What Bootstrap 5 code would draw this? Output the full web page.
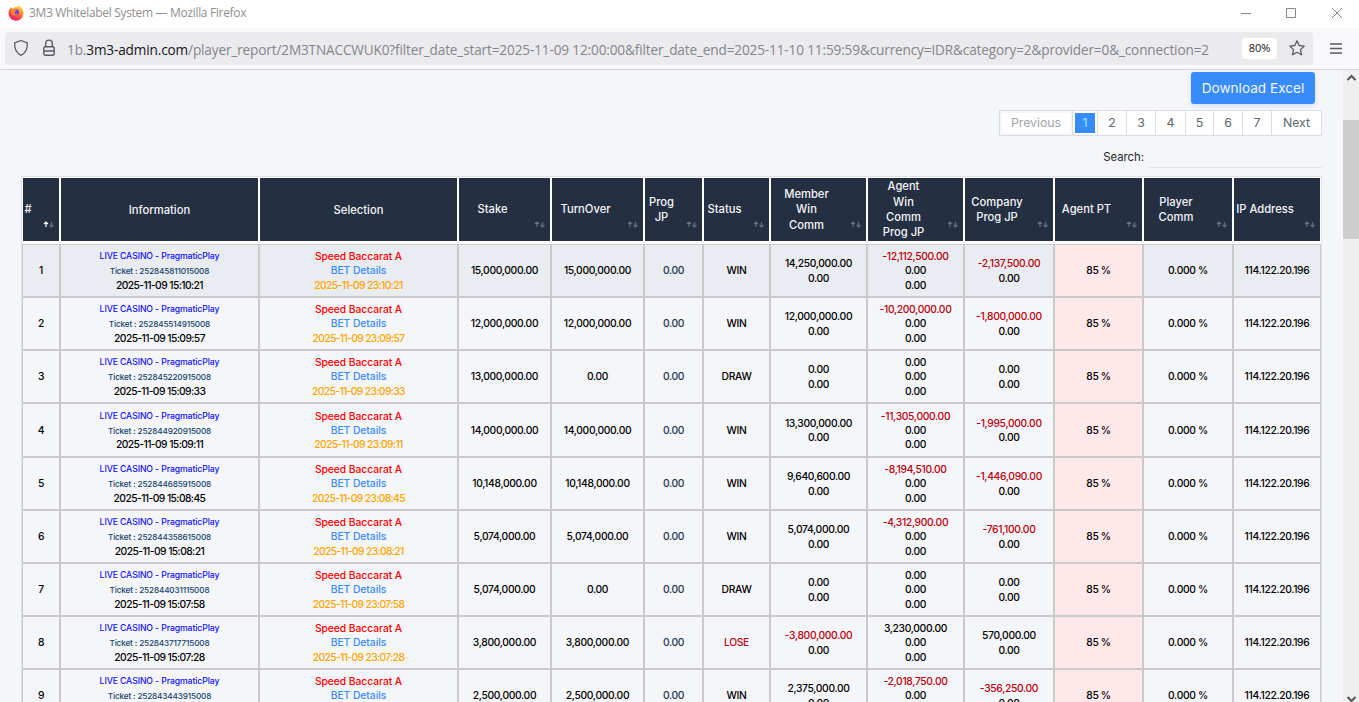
<!DOCTYPE html>
<html lang="en">
<head>
<meta charset="utf-8">
<title>3M3 Whitelabel System</title>
<link href="https://cdn.jsdelivr.net/npm/bootstrap@5.3.0/dist/css/bootstrap.min.css" rel="stylesheet">
<style>
body{height:702px;overflow:hidden;background:#f5f6fa;font-family:Inter,"Open Sans",sans-serif;font-size:11px;color:#000}
svg{flex-shrink:0}
.titlebar{height:28px;background:#fff;font:12px "Open Sans",sans-serif;color:#8f8f8f;padding:0 16px 3px 8px}
.titlebar .caption{letter-spacing:-.32px;margin-left:5px}
.toolbar{height:42px;background:#f9f9fb;border-bottom:1px solid #d2d2da;padding:0 17px 1px 5px;font-family:"Open Sans",sans-serif}
.urlbar{width:1308px;height:33px;background:#ebebee;border-radius:4px;padding:0 8px}
.lock{margin-left:14px}
.star{margin-left:12px}
.address{font-size:13.6px;color:#85858a;margin-left:12px;padding-top:4px;white-space:nowrap;letter-spacing:-.139px}
.address b{font-weight:400;color:#15141a}
.zoomlevel{width:35px;height:21px;background:#fff;border-radius:3px;font-size:11px;color:#15141a;padding-top:1px}
.viewport{height:632px;overflow:hidden}
.content-area{width:1343px;padding:2px 21px 0}
.content-area>*{flex-shrink:0}
.scroller{width:16px;background:#f0f0f0}
.scroller .thumb{height:119px;margin-top:33px;background:#cdcdcd}
.btn-excel{width:124px;height:32px;margin-right:7px;padding:0;background:#388bfa;border:0;border-radius:3px;color:#f2f6ff;font-size:13.6px;box-shadow:0 2px 5px #388bfa33}
.pager{height:26px;margin-top:6px;border:1px solid #dadcdf;background:#fff;font-size:12.3px;color:#5d6570;width:323px}
.pager span{display:flex;align-items:center;justify-content:center;border-right:1px solid #dadcdf}
.pager span:last-child{border-right:0}
.pager .prev{color:#a0a5ab;box-shadow:inset 0 0 0 2px #f5f6fa}
.pager .current{background:#388bfa;background-clip:content-box;padding:2px;color:#a5e6ff}
.search{height:40px;padding-top:10px;font-size:11.3px;color:#212529}
.search b{margin-top:3px}
.search i{width:173px;height:22px;border-bottom:1px solid #e1e4ea;margin-left:5px}
.report{table-layout:fixed;width:1301px;border-collapse:separate;border-spacing:0;border:1px solid #dee2e6;text-align:center;font-weight:500}
.report th{position:relative;height:67px;background:#252f42;border:1px solid #fff;border-bottom-width:3px;color:#f3f5f8;font-size:11.2px;font-weight:500;line-height:15.4px;padding:1px 24px 0 0;vertical-align:middle}
.report th:first-child{padding-right:26px}
.report th.plain{padding:2px 0 0}
.report th svg{position:absolute;right:4px;bottom:13px}
.report td{height:53px;border:1px solid #cacaca;line-height:14.2px;padding:0;vertical-align:middle;font-size:10.3px;letter-spacing:-.33px;white-space:nowrap}
.report tr.tall td{height:54px}
.report tbody tr:first-child td{background:#e9ecf0}
.report tbody td.share{background:#ffe8ea!important}
.neg{color:#b9000b}
.kind{color:#11f;font-size:8.7px;letter-spacing:-.11px}
.ticket{color:#123f6b;font-size:8.2px;letter-spacing:-.15px;padding-top:1px}
.stamp{letter-spacing:-.58px;margin-top:-1px}
.game{color:#f00;letter-spacing:-.05px}.details{color:#388bfa;letter-spacing:-.05px}.late{color:#ffa500;letter-spacing:-.63px}
.jp{color:#233553}
</style>
</head>
<body>
<header class="titlebar d-flex align-items-center">
<svg width="16" height="16" viewBox="0 0 16 16"><defs><linearGradient id="fx" x1=".8" y1="0" x2=".3" y2="1"><stop offset="0" stop-color="#ffe34a"/><stop offset=".4" stop-color="#ff9026"/><stop offset=".75" stop-color="#fb3a50"/><stop offset="1" stop-color="#e21a8d"/></linearGradient></defs><path d="M2.200 3.200 3 2l.9 1.600 1.400.1C6.300 2.500 7 2 8 2l2 .3c-.4-1-.2-1.700.6-2.200.7 1.500 4.900 3.300 4.900 8A7.500 7.500 0 1 1 .5 8.500C.4 6.500 1 5 2.200 3.200z" fill="url(#fx)"/><circle cx="8" cy="7.300" r="3.100" fill="#7542e5"/><path d="M3 4.300c1.500-.8 3-.5 3.900.3l2 .4c-.2.8-1.400 1-1.700 1.300-.4.5.3 1.500-1 1.800.7 1.400 2.800 1.400 4 .4-.5 2.500-5.600 3-6.800-.3-.4-1.500.2-2.700-.4-3.900z" fill="#ff8a26"/></svg>
<span class="caption">3M3 Whitelabel System — Mozilla Firefox</span>
<svg class="ms-auto" width="102" height="12" viewBox="0 0 102 12" fill="none" stroke="#858585"><path d="M0 6.500h10M45.500 1.500h9v9h-9zM91 1l10 10M101 1 91 11"/></svg>
</header>
<div class="toolbar d-flex align-items-center">
<div class="urlbar d-flex align-items-center">
<svg width="16" height="18" viewBox="0 0 16 18" fill="none" stroke="#5b5b66" stroke-width="1.300"><path d="m8 1.500 6.300 2.400c.3 5-1.400 10-6.300 12.400C3.100 13.900 1.400 8.900 1.700 3.900z" stroke-linejoin="round"/></svg>
<svg class="lock" width="12" height="18" viewBox="0 0 12 18" fill="none" stroke="#5b5b66" stroke-width="1.400"><rect x=".8" y="7.700" width="10.400" height="8.500" rx="1.500"/><path d="M2.700 7.700V4.400a3.300 3.300 0 0 1 6.600 0v3.300M1 12h10"/></svg>
<span class="address">1b.<b>3m3-admin.com</b>/player_report/2M3TNACCWUK0?filter_date_start=2025-11-09 12:00:00&amp;filter_date_end=2025-11-10 11:59:59&amp;currency=IDR&amp;category=2&amp;provider=0&amp;_connection=2</span>
<span class="zoomlevel ms-auto d-flex align-items-center justify-content-center">80%</span>
<svg class="star" width="16" height="16" viewBox="0 0 16 16" fill="none" stroke="#5b5b66" stroke-width="1.300" stroke-linejoin="round"><path d="m8 .8 2.200 4.700 5 .6-3.700 3.500 1 5.200L8 12.300l-4.500 2.500 1-5.200L.8 6.100l5-.6z"/></svg>
</div>
<svg class="ms-auto" width="12" height="11" viewBox="0 0 12 11" stroke="#5b5b66" stroke-width="1.300"><path d="M0 1h12M0 5.500h12M0 10h12"/></svg>
</div>
<div class="viewport d-flex">
<main class="content-area d-flex flex-column align-items-end">
<button class="btn btn-excel">Download Excel</button>
<nav class="pager d-flex"><span class="prev" style="width:73px">Previous</span><span class="current" style="width:25px">1</span><span style="width:29px">2</span><span style="width:29px">3</span><span style="width:30px">4</span><span style="width:28px">5</span><span style="width:29px">6</span><span style="width:29px">7</span><span style="width:49px">Next</span></nav>
<label class="search d-flex"><b class="fw-normal">Search:</b><i></i></label>
<table class="report">
<colgroup id="cols"></colgroup>
<thead><tr id="head"></tr></thead>
<tbody id="rows"></tbody>
</table>
</main>
<aside class="scroller d-flex flex-column"><svg width="16" height="17" viewBox="0 0 16 17" fill="none" stroke="#555" stroke-width="2"><path d="m4.500 10 4-4 4 4"/></svg><div class="thumb"></div><svg class="mt-auto" width="16" height="7" viewBox="0 0 16 7" fill="none" stroke="#555" stroke-width="2"><path d="m4.500 2 4 4 4-4"/></svg></aside>
</div>
<script>
const widths=[38,199,199,93,93,59,67,97,97,90,89,90,88];
const titles=['#','Information','Selection','Stake','TurnOver','Prog<br>JP','Status','Member<br>Win<br>Comm','Agent<br>Win<br>Comm<br>Prog JP','Company<br>Prog JP','Agent PT','Player<br>Comm','IP Address'];
const data=[
['252845811015008','15:10:21','15,000,000.00','15,000,000.00','WIN','14,250,000.00','-12,112,500.00','-2,137,500.00'],
['252845514915008','15:09:57','12,000,000.00','12,000,000.00','WIN','12,000,000.00','-10,200,000.00','-1,800,000.00'],
['252845220915008','15:09:33','13,000,000.00','0.00','DRAW','0.00','0.00','0.00'],
['252844920915008','15:09:11','14,000,000.00','14,000,000.00','WIN','13,300,000.00','-11,305,000.00','-1,995,000.00'],
['252844685915008','15:08:45','10,148,000.00','10,148,000.00','WIN','9,640,600.00','-8,194,510.00','-1,446,090.00'],
['252844358615008','15:08:21','5,074,000.00','5,074,000.00','WIN','5,074,000.00','-4,312,900.00','-761,100.00'],
['252844031115008','15:07:58','5,074,000.00','0.00','DRAW','0.00','0.00','0.00'],
['252843717715008','15:07:28','3,800,000.00','3,800,000.00','LOSE','-3,800,000.00','3,230,000.00','570,000.00'],
['252843443915008','15:07:03','2,500,000.00','2,500,000.00','WIN','2,375,000.00','-2,018,750.00','-356,250.00']];
const num=v=>`<div class="${v[0]=='-'?'neg':''}">${v}</div>`;
const zero='<div>0.00</div>';
cols.innerHTML=widths.map(w=>`<col style="width:${w}px">`).join('');
head.innerHTML=titles.map((t,i)=>i==1||i==2?`<th class="plain">${t}</th>`:`<th>${t}<svg width="12" height="7" viewBox="0 0 12 7" fill="none" stroke="#667080" stroke-width="1.200"><path ${i?'':'stroke="#fff"'} d="M3 6V1M1 3 3 1l2 2"/><path d="M8.500 1v5M6.500 4l2 2 2-2"/></svg></th>`).join('');
rows.innerHTML=data.map((r,i)=>`<tr class="${i==3?'tall':''}"><td>${i+1}</td><td><div class="kind">LIVE CASINO - PragmaticPlay</div><div class="ticket">Ticket : ${r[0]}</div><div class="stamp">2025-11-09 ${r[1]}</div></td><td><div class="game">Speed Baccarat A</div><div class="details">BET Details</div><div class="late">2025-11-09 ${r[1].replace('15','23')}</div></td><td>${r[2]}</td><td>${r[3]}</td><td class="jp">0.00</td><td class="${r[4]=='LOSE'?'neg':''}">${r[4]}</td><td>${num(r[5])}${zero}</td><td>${num(r[6])}${zero}${zero}</td><td>${num(r[7])}${zero}</td><td class="share">85 %</td><td>0.000 %</td><td>114.122.20.196</td></tr>`).join('');
</script>
<script src="https://cdn.jsdelivr.net/npm/bootstrap@5.3.0/dist/js/bootstrap.bundle.min.js"></script>
</body>
</html>
